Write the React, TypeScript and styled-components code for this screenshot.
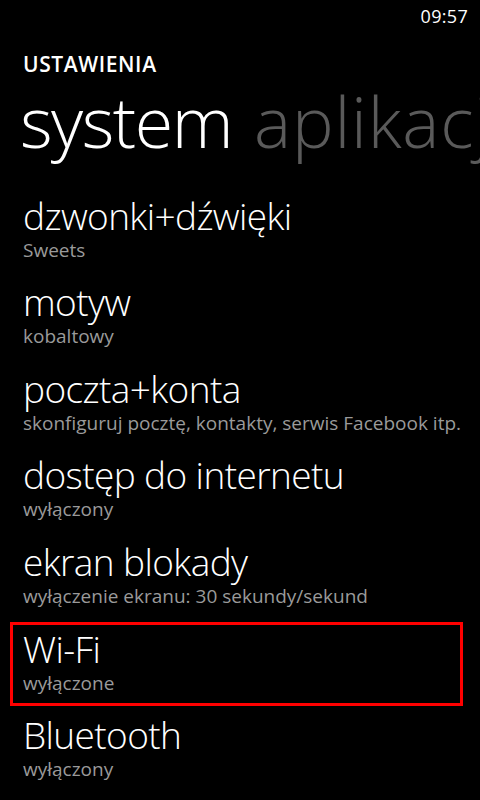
import React from "react";
import styled, { createGlobalStyle } from "styled-components";

const Global = createGlobalStyle`
  html, body { margin: 0; padding: 0; background: #000; }
  body { font-family: "Open Sans", "Noto Sans", sans-serif; color: #fff; }
`;

const Screen = styled.div`
  width: 480px;
  height: 800px;
  overflow: hidden;
  background: #000;
  display: flex;
  flex-direction: column;
`;

const StatusBar = styled.div`
  height: 32px;
  display: flex;
  justify-content: flex-end;
  align-items: center;
  padding-right: 12px;
  font-size: 18px;
  font-weight: 400;
  letter-spacing: 0.3px;
`;

const AppTitle = styled.div`
  margin-top: 18px;
  padding-left: 23px;
  font-size: 21px;
  font-weight: 600;
  line-height: 28px;
  letter-spacing: 0.6px;
`;

const Pivot = styled.div`
  display: flex;
  gap: 22px;
  padding-left: 20px;
  white-space: nowrap;
  font-size: 70px;
  font-weight: 300;
  line-height: 86px;
`;

const PivotItem = styled.span<{ $active?: boolean }>`
  color: ${(p) => (p.$active ? "#fff" : "#5a5a5a")};
  letter-spacing: ${(p) => (p.$active ? "-1.5px" : "0.8px")};
`;

const List = styled.div`
  display: flex;
  flex-direction: column;
  margin-top: 27.5px;
`;

const Row = styled.div<{ $highlight?: boolean }>`
  height: 86.67px;
  box-sizing: border-box;
  padding-left: 23px;
  display: flex;
  flex-direction: column;
  ${(p) =>
    p.$highlight
      ? `
    height: 84px;
    border: 3px solid #ff0000;
    margin: -2.5px 17px 5.17px 10px;
    padding-left: 10px;
  `
      : ""}
`;

const Title = styled.div`
  font-size: 37px;
  font-weight: 300;
  line-height: 48px;
  letter-spacing: -0.6px;
`;

const Sub = styled.div`
  font-size: 19px;
  font-weight: 400;
  line-height: 20px;
  color: #9a9a9a;
`;

const items = [
  { t: "dzwonki+dźwięki", s: "Sweets" },
  { t: "motyw", s: "kobaltowy" },
  { t: "poczta+konta", s: "skonfiguruj pocztę, kontakty, serwis Facebook itp." },
  { t: "dostęp do internetu", s: "wyłączony" },
  { t: "ekran blokady", s: "wyłączenie ekranu: 30 sekundy/sekund" },
  { t: "Wi-Fi", s: "wyłączone", h: true },
  { t: "Bluetooth", s: "wyłączony" },
];

export default function App() {
  return (
    <>
      <Global />
      <Screen>
        <StatusBar>09:57</StatusBar>
        <AppTitle>USTAWIENIA</AppTitle>
        <Pivot>
          <PivotItem $active>system</PivotItem>
          <PivotItem>aplikacje</PivotItem>
        </Pivot>
        <List>
          {items.map((it) => (
            <Row key={it.t} $highlight={it.h}>
              <Title>{it.t}</Title>
              <Sub>{it.s}</Sub>
            </Row>
          ))}
        </List>
      </Screen>
    </>
  );
}
